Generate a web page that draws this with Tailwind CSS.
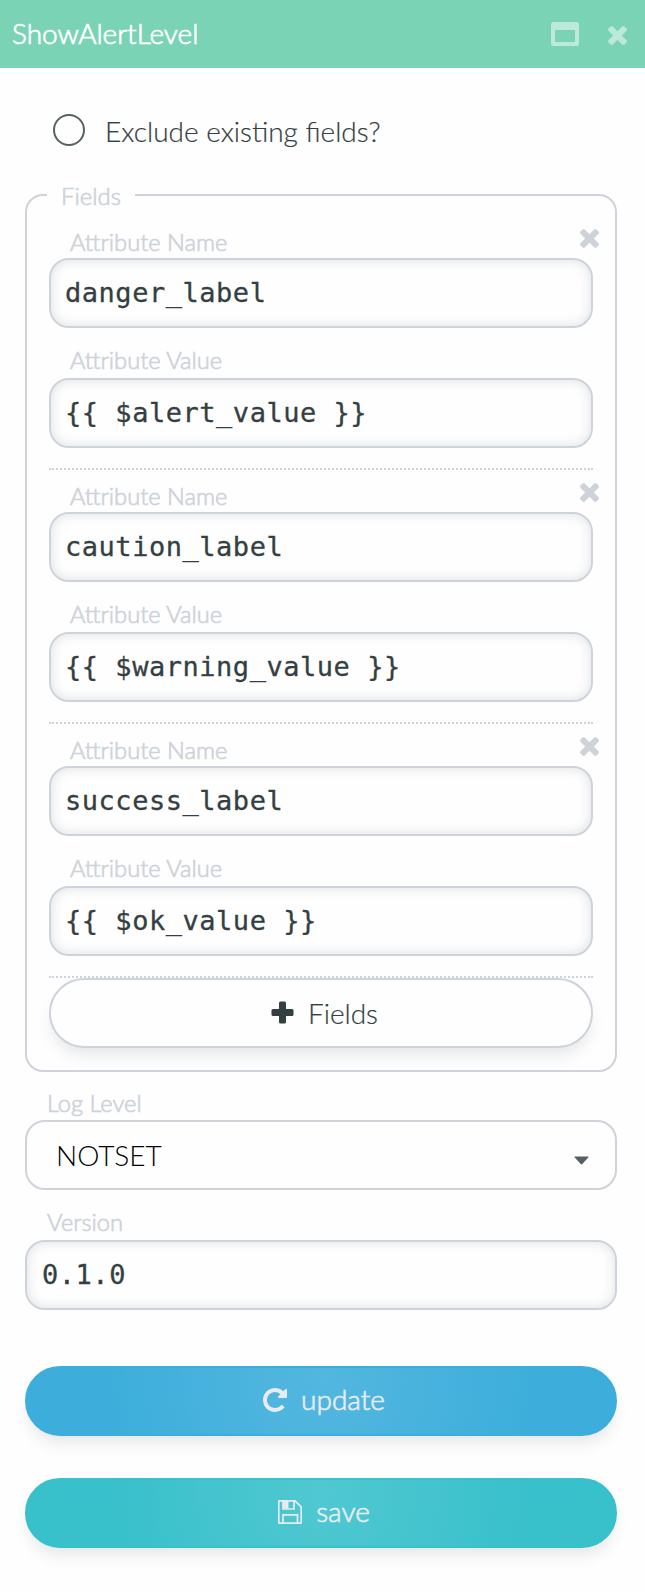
<!DOCTYPE html>
<html lang="en">
<head>
<meta charset="utf-8">
<title>ShowAlertLevel</title>
<script src="https://cdn.jsdelivr.net/npm/@tailwindcss/browser@4"></script>
</head>
<body class="w-[645px] h-[1592px] bg-[#fefefe] font-['Lato',sans-serif] text-[#343f42] overflow-hidden">
<svg class="hidden">
  <symbol id="x" viewBox="110 258 1188 1188"><path fill="currentColor" d="M1298 1214q0 40-28 68l-136 136q-28 28-68 28t-68-28l-294-294-294 294q-28 28-68 28t-68-28l-136-136q-28-28-28-68t28-68l294-294-294-294q-28-28-28-68t28-68l136-136q28-28 68-28t68 28l294 294 294-294q28-28 68-28t68 28l136 136q28 28 28 68t-28 68l-294 294 294 294q28 28 28 68z"/></symbol>
</svg>
<header class="h-[68px] bg-[#7ad3b5] flex items-center pl-[12px] pr-[18px] text-white">
  <h1 class="text-[28px] leading-[34px] grow font-light mt-[-2px] [-webkit-text-stroke:0.7px_currentColor]">ShowAlertLevel</h1>
  <svg class="w-7 h-6 text-[#bce9da] mr-[29px]" viewBox="0 0 28 24"><path fill="currentColor" fill-rule="evenodd" d="M2.500 0H25.500Q28 0 28 2.500V21.500Q28 24 25.500 24H2.500Q0 24 0 21.500V2.500Q0 0 2.500 0ZM4 8V20H24V8Z"/></svg>
  <svg class="w-[19px] h-[19px] text-[#bce9da] mt-[2px]"><use href="#x"/></svg>
</header>
<main class="px-[25px]">
  <label class="flex items-center gap-[20px] pl-7 mt-[46px] h-8">
    <span class="size-8 rounded-full border-2 border-[#566164]"></span>
    <span class="text-[28px] leading-8 font-light mt-[1px] [-webkit-text-stroke:0.2px_currentColor]">Exclude existing fields?</span>
  </label>
  <fieldset class="mt-[34px] w-[592px] h-[892px] border-2 border-[#ced3da] rounded-[18px] px-[22px]">
    <legend class="ml-[-2px] px-[14px] pt-[2px] text-[24px] leading-[28px] w-[88px] h-[30px] text-[#ced3da] font-light [-webkit-text-stroke:0.7px_currentColor]">Fields</legend>
    <section class="h-[260px] pt-[13px] border-b-2 border-dotted border-[#ced3da]">
      <div class="flex justify-between h-[35px]"><span class="pl-[21px] pt-[4px] text-[23.700px] leading-[30px] text-[#ced3da] font-light [-webkit-text-stroke:0.7px_currentColor]">Attribute Name</span><svg class="w-[19px] h-[19px] text-[#ced3da] mt-[6px] mr-[-6px]"><use href="#x"/></svg></div>
      <div class="h-[70px] border-2 border-[#ced3da] rounded-[20px] px-[14px] text-[27px] leading-[66px] whitespace-pre font-['DejaVu_Sans_Mono',monospace] tracking-[0.53px] shadow-[inset_0_0_12px_rgba(52,63,80,0.16)] [-webkit-text-stroke:0.3px_currentColor]">danger_label</div>
      <div class="h-[50px] pl-[21px] pt-[17px] text-[23.700px] leading-[30px] text-[#ced3da] font-light [-webkit-text-stroke:0.7px_currentColor]">Attribute Value</div>
      <div class="h-[70px] border-2 border-[#ced3da] rounded-[20px] px-[14px] text-[27px] leading-[66px] whitespace-pre font-['DejaVu_Sans_Mono',monospace] tracking-[0.53px] shadow-[inset_0_0_12px_rgba(52,63,80,0.16)] [-webkit-text-stroke:0.3px_currentColor]">{{ $alert_value }}</div>
    </section>
    <section class="h-[254px] border-b-2 border-dotted border-[#ced3da]">
      <div class="flex justify-between h-[42px]"><span class="pl-[21px] pt-[11px] text-[23.700px] leading-[30px] text-[#ced3da] font-light [-webkit-text-stroke:0.7px_currentColor]">Attribute Name</span><svg class="w-[19px] h-[19px] text-[#ced3da] mt-[13px] mr-[-6px]"><use href="#x"/></svg></div>
      <div class="h-[70px] border-2 border-[#ced3da] rounded-[20px] px-[14px] text-[27px] leading-[66px] whitespace-pre font-['DejaVu_Sans_Mono',monospace] tracking-[0.53px] shadow-[inset_0_0_12px_rgba(52,63,80,0.16)] [-webkit-text-stroke:0.3px_currentColor]">caution_label</div>
      <div class="h-[50px] pl-[21px] pt-[17px] text-[23.700px] leading-[30px] text-[#ced3da] font-light [-webkit-text-stroke:0.7px_currentColor]">Attribute Value</div>
      <div class="h-[70px] border-2 border-[#ced3da] rounded-[20px] px-[14px] text-[27px] leading-[66px] whitespace-pre font-['DejaVu_Sans_Mono',monospace] tracking-[0.53px] shadow-[inset_0_0_12px_rgba(52,63,80,0.16)] [-webkit-text-stroke:0.3px_currentColor]">{{ $warning_value }}</div>
    </section>
    <section class="h-[254px] border-b-2 border-dotted border-[#ced3da]">
      <div class="flex justify-between h-[42px]"><span class="pl-[21px] pt-[11px] text-[23.700px] leading-[30px] text-[#ced3da] font-light [-webkit-text-stroke:0.7px_currentColor]">Attribute Name</span><svg class="w-[19px] h-[19px] text-[#ced3da] mt-[13px] mr-[-6px]"><use href="#x"/></svg></div>
      <div class="h-[70px] border-2 border-[#ced3da] rounded-[20px] px-[14px] text-[27px] leading-[66px] whitespace-pre font-['DejaVu_Sans_Mono',monospace] tracking-[0.53px] shadow-[inset_0_0_12px_rgba(52,63,80,0.16)] [-webkit-text-stroke:0.3px_currentColor]">success_label</div>
      <div class="h-[50px] pl-[21px] pt-[17px] text-[23.700px] leading-[30px] text-[#ced3da] font-light [-webkit-text-stroke:0.7px_currentColor]">Attribute Value</div>
      <div class="h-[70px] border-2 border-[#ced3da] rounded-[20px] px-[14px] text-[27px] leading-[66px] whitespace-pre font-['DejaVu_Sans_Mono',monospace] tracking-[0.53px] shadow-[inset_0_0_12px_rgba(52,63,80,0.16)] [-webkit-text-stroke:0.3px_currentColor]">{{ $ok_value }}</div>
    </section>
    <button class="w-full h-[70px] flex items-center justify-center gap-[14px] pl-[7px] border-2 border-[#ced3da] rounded-[35px] bg-[#fefefe] shadow-[0_10px_16px_-4px_rgba(52,63,66,0.13)] text-[28px] leading-8 font-light [-webkit-text-stroke:0.2px_currentColor]">
      <svg class="w-[23px] h-[23px] mt-[-1px]" viewBox="0 0 23 23" fill="currentColor" stroke="none"><rect x="8" y="0.500" width="7" height="22" rx="1.500"/><rect x="0.500" y="8" width="22" height="7" rx="1.500"/></svg>
      <span class="mt-[-1px]">Fields</span>
    </button>
  </fieldset>
  <div class="h-[48px] pl-[22px] pt-[16px] text-[23.700px] leading-[30px] text-[#ced3da] font-light [-webkit-text-stroke:0.7px_currentColor]">Log Level</div>
  <div class="w-[592px] h-[70px] border-2 border-[#ced3da] rounded-[20px] flex items-center justify-between pl-[29px] pr-[26px] text-black">
    <span class="text-[28px] leading-8 font-light">NOTSET</span>
    <svg class="w-[15px] h-[9px] mt-[11px] text-[#566164]" viewBox="0 0 15 9"><path fill="currentColor" d="M1 .5H14Q15 .5 14.300 1.400L8.300 8Q7.500 8.800 6.700 8L.7 1.400Q0 .5 1 .5Z"/></svg>
  </div>
  <div class="h-[50px] pl-[22px] pt-[17px] text-[23.700px] leading-[30px] text-[#ced3da] font-light [-webkit-text-stroke:0.7px_currentColor]">Version</div>
  <div class="w-[592px] h-[70px] border-2 border-[#ced3da] rounded-[20px] px-[15px] text-[27px] leading-[66px] font-['DejaVu_Sans_Mono',monospace] tracking-[0.53px] shadow-[inset_0_0_12px_rgba(52,63,80,0.16)] [-webkit-text-stroke:0.3px_currentColor]">0.1.0</div>
  <button class="mt-[56px] w-[592px] h-[70px] flex items-center justify-center gap-[14px] pl-[6px] rounded-[35px] border-2 border-[#3daedb] bg-[radial-gradient(circle_at_50%_20%,#53b7df,#3daedb_210px)] shadow-[0_10px_16px_-4px_rgba(52,63,66,0.13)] text-[#e8ebf0] text-[28px] leading-8 font-light [-webkit-text-stroke:0.7px_currentColor]">
    <svg class="w-6 h-6 mt-[-2px]" viewBox="0 0 1536 1536"><path fill="currentColor" stroke="none" d="M1536 128v448q0 26-19 45t-45 19h-448q-42 0-59-40-17-39 14-69l138-138Q969 256 768 256q-104 0-198.500 40.500T406 406 296.500 569.500 256 768t40.500 198.500T406 1130t163.500 109.500T768 1280q119 0 225-52t179-147q7-10 23-12 15 0 25 9l137 138q9 8 9.500 20.500t-7.500 22.500q-109 132-264 204.500T768 1536q-156 0-298-61t-245-164-164-245T0 768t61-298 164-245T470 61 768 0q147 0 284.500 55.500T1297 212l130-129q29-31 70-14 39 17 39 59z"/></svg>
    <span class="mt-[-4px]">update</span>
  </button>
  <button class="mt-[42px] w-[592px] h-[70px] flex items-center justify-center gap-[14px] pl-[6px] rounded-[35px] border-2 border-[#38c0cb] bg-[radial-gradient(circle_at_50%_20%,#50c8d1,#38c0cb_210px)] shadow-[0_10px_16px_-4px_rgba(52,63,66,0.13)] text-[#e8ebf0] text-[28px] leading-8 font-light [-webkit-text-stroke:0.7px_currentColor]">
    <svg class="w-6 h-6 mt-[-2px]" viewBox="0 0 24 24"><path fill="none" stroke="currentColor" stroke-width="1.700" d="M1.500 .8H17L23.200 7V22.500Q23.200 23.200 22.500 23.200H1.500Q.8 23.200 .8 22.500V1.500Q.8 .8 1.500 .8ZM5 1V9H16V1M5 23V14.800H19.500V23"/><path d="M5 1H10.500V8.500H5Z" fill="currentColor"/></svg>
    <span class="mt-[-4px]">save</span>
  </button>
</main>
</body>
</html>
